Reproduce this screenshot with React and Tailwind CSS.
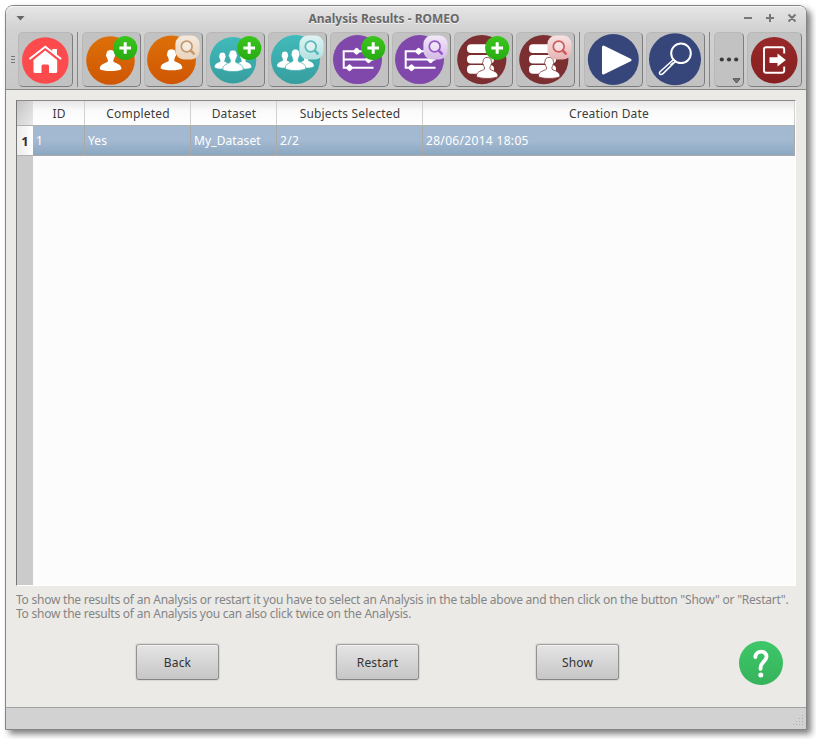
import React from "react";

function ToolButton({ label, width = "w-[59px]", vb = 59, children }) {
  return (
    <button
      aria-label={label}
      className={`${width} h-[55px] shrink-0 rounded-[5px] border border-t-[#b8b8b8] border-l-[#b8b8b8] border-r-[#7d7d7d] border-b-[#7d7d7d] bg-[#c2c2c2]`}
    >
      <svg viewBox={`0 0 ${vb} 55`} className="-m-px block h-[55px] max-w-none" style={{ width: vb }}>
        {children}
      </svg>
    </button>
  );
}

function Separator({ className }) {
  return <div className={`h-[55px] w-px shrink-0 bg-[#858585] ${className}`} />;
}

function PlusBadge() {
  return (
    <g>
      <circle cx="43.2" cy="16" r="12.1" fill="url(#green)" />
      <path d="M43.2 10.2v11.6M37.4 16h11.6" stroke="#fff" strokeWidth="3" fill="none" />
    </g>
  );
}

function LensBadge({ fill, stroke }) {
  return (
    <g>
      <rect x="31.4" y="3.4" width="24.2" height="24.2" rx="8.5" fill={fill} />
      <circle cx="42.7" cy="14.500" r="5.4" fill="#fff" fillOpacity=".35" stroke={stroke} strokeWidth="1.7" />
      <path d="M46.800 18.600l2.9 3" stroke={stroke} strokeWidth="2.6" strokeLinecap="round" />
    </g>
  );
}

const PERSON =
  "M-4.2 -6.800C-4.2 -9.8 -2.4 -11 0 -11S4.2 -9.8 4.2 -6.800C4.900 -6.4 4.700 -4.400 3.900 -4C3.600 -2.600 3.100 -2 2.800 -1.400V.8C4.500 2.400 10.800 2.600 10.900 8C7.500 10.700 -7.500 10.700 -10.900 8C-10.800 2.600 -4.500 2.400 -2.800 .8V-1.400C-3.100 -2 -3.600 -2.600 -3.900 -4C-4.700 -4.400 -4.900 -6.400 -4.2 -6.800Z";

function Person({ x, y, sx = 1, sy = 1, ...rest }) {
  return <path d={PERSON} transform={`translate(${x} ${y}) scale(${sx} ${sy})`} fill="#fff" {...rest} />;
}

function People({ cx, cy }) {
  return (
    <g>
      <Person x={cx - 10.6} y={cy} sx={0.72} sy={0.78} />
      <Person x={cx + 10.6} y={cy} sx={0.72} sy={0.78} />
      <Person x={cx} y={cy + 0.3} sx={0.95} sy={1.02} stroke="#3cabab" strokeWidth=".7" />
    </g>
  );
}

function Sliders() {
  return (
    <g>
      <circle cx="27.5" cy="27.6" r="24.5" fill="#8148ab" />
      <path d="M43.5 19.2H13.7V35.8H43.5M14 27.5H43.5" fill="none" stroke="#fff" strokeWidth="2" />
      <g fill="#fff">
        <rect x="23.8" y="16.5" width="5.6" height="5.6" rx="1.4" transform="rotate(45 26.6 19.3)" />
        <rect x="35.8" y="25" width="5.6" height="5.6" rx="1.4" transform="rotate(45 38.6 27.8)" />
        <rect x="16.7" y="33" width="5.6" height="5.6" rx="1.4" transform="rotate(45 19.5 35.8)" />
      </g>
    </g>
  );
}

function Stack() {
  return (
    <g>
      <circle cx="27.8" cy="27.6" r="24.6" fill="#7b2f30" />
      <g fill="#fff">
        <rect x="13" y="12.3" width="27" height="8.8" rx="4" />
        <rect x="13" y="23" width="27" height="8.6" rx="4" />
        <rect x="13" y="33" width="27" height="8.8" rx="4" />
      </g>
      <Person x={33.2} y={36.4} stroke="#7b2f30" strokeWidth=".8" />
    </g>
  );
}

function Gradients() {
  const stops = [
    ["green", "#3cc51d", "#27ab13"],
    ["orange", "#dd7008", "#cf5603"],
    ["teal", "#41babb", "#379e9f"],
    ["red", "#98292a", "#861f20"],
    ["help", "#3ec769", "#36b35b"],
    ["lensTan", "#f6e9dc", "#e9d3bd"],
    ["lensTeal", "#dff4f4", "#b4e0e0"],
    ["lensPurple", "#f2e9f9", "#d2b9e5"],
    ["lensRed", "#f8e2e2", "#e6b4b4"],
  ];
  return (
    <svg className="absolute h-0 w-0">
      <defs>
        {stops.map(([id, a, b]) => (
          <linearGradient key={id} id={id} x1="0" y1="0" x2="0" y2="1">
            <stop offset="0" stopColor={a} />
            <stop offset="1" stopColor={b} />
          </linearGradient>
        ))}
      </defs>
    </svg>
  );
}

function TitleBar() {
  return (
    <header className="relative flex h-[23px] items-center justify-between rounded-t-[7px] bg-linear-to-b from-[#e6e6e6] to-[#d2d2d2] shadow-[inset_0_1px_0_#f6f6f6]">
      <svg width="9" height="6" className="mt-px ml-[10px]">
        <path d="M.5 1h8L4.500 5.500z" fill="#666" />
      </svg>
      <h1 className="absolute inset-x-0 top-[4px] pr-[44px] text-center text-[12px] leading-[18px] font-bold text-[#686868]">
        <span className="[text-shadow:0_1px_0_#f4f4f4]">Analysis Results - ROMEO</span>
      </h1>
      <svg width="54" height="12" className="mr-[9px] mt-px" fill="none" stroke="#777" strokeWidth="2">
        <path d="M1 6h8M23 6h8M27 2v8M45.500 2.500l7 7M52.500 2.500l-7 7" />
      </svg>
    </header>
  );
}

function ToolBar() {
  return (
    <nav className="flex h-[61px] items-start border-b border-[#8a8a8a] bg-linear-to-b from-[#d2d2d2] to-[#c8c8c8] pt-[3px]">
      <div className="mt-[24px] ml-[5px] flex w-[7px] flex-col gap-[2px]">
        <i className="h-px w-[4px] bg-[#777]" />
        <i className="h-px w-[4px] bg-[#777]" />
        <i className="h-px w-[4px] bg-[#777]" />
      </div>
      <ToolButton label="Home" width="w-[55px]" vb={55}>
        <circle cx="27.3" cy="28.5" r="23.3" fill="#fd4b4d" />
        <path d="M11.500 27L27.300 14.700L43.100 27" fill="none" stroke="#fff" strokeWidth="2" />
        <path d="M34.300 17h4.700v7.500l-4.700-3.700z" fill="#fff" />
        <path d="M27.300 18.600L39.200 28V39.500q0 1.500-1.500 1.500H31V34q0-1.500-1.500-1.500H25q-1.500 0-1.500 1.500v7H17q-1.500 0-1.500-1.500V28z" fill="#fff" />
      </ToolButton>
      <Separator className="mr-[4px] ml-[4px]" />
      <div className="flex gap-[3px]">
        <ToolButton label="New subject">
          <circle cx="28.500" cy="28.500" r="24.300" fill="url(#orange)" />
          <Person x={28.6} y={29} />
          <PlusBadge />
        </ToolButton>
        <ToolButton label="Find subject">
          <circle cx="27.500" cy="27.800" r="24.400" fill="url(#orange)" />
          <Person x={27.5} y={28.2} />
          <LensBadge fill="url(#lensTan)" stroke="#c39b70" />
        </ToolButton>
        <ToolButton label="New group">
          <circle cx="27" cy="28.300" r="23.300" fill="url(#teal)" />
          <People cx={27} cy={29} />
          <PlusBadge />
        </ToolButton>
        <ToolButton label="Find group">
          <circle cx="27.500" cy="27.500" r="24.500" fill="url(#teal)" />
          <People cx={27.5} cy={28} />
          <LensBadge fill="url(#lensTeal)" stroke="#58b7ba" />
        </ToolButton>
        <ToolButton label="New pipeline">
          <Sliders />
          <PlusBadge />
        </ToolButton>
        <ToolButton label="Find pipeline">
          <Sliders />
          <LensBadge fill="url(#lensPurple)" stroke="#9a55c8" />
        </ToolButton>
        <ToolButton label="New dataset">
          <Stack />
          <PlusBadge />
        </ToolButton>
        <ToolButton label="Find dataset">
          <Stack />
          <LensBadge fill="url(#lensRed)" stroke="#cf5b5b" />
        </ToolButton>
      </div>
      <Separator className="mr-[4px] ml-[4px]" />
      <div className="flex gap-[3px]">
        <ToolButton label="Run analysis">
          <circle cx="29.300" cy="27.500" r="25.500" fill="#37467a" />
          <path d="M19.500 15L46 28L19.500 41z" fill="#fff" stroke="#fff" strokeWidth="3" strokeLinejoin="round" />
        </ToolButton>
        <ToolButton label="Results">
          <circle cx="29" cy="27.300" r="26" fill="#37467a" />
          <g fill="none" stroke="#fff">
            <circle cx="35" cy="21.300" r="9.800" strokeWidth="2" />
            <path d="M27.300 27.800L14 39.800Q12.800 41.500 14.200 42.300Q15.600 43 17 41.600L29.200 29.700M27.300 30.500L24.500 33.300" strokeWidth="1.500" />
          </g>
        </ToolButton>
      </div>
      <Separator className="mr-[4px] ml-[4px]" />
      <div className="flex gap-[3px]">
        <ToolButton label="More" width="w-[30px]" vb={30}>
          <g fill="#3a3a3a">
            <circle cx="7.800" cy="27.500" r="2.100" />
            <circle cx="15" cy="27.500" r="2.100" />
            <circle cx="22.200" cy="27.500" r="2.100" />
          </g>
          <path d="M19 46.700h7l-3.500 4.300z" fill="#777" stroke="#555" strokeWidth="1" />
        </ToolButton>
        <ToolButton label="Exit" width="w-[55px]" vb={55}>
          <circle cx="27.200" cy="28.200" r="23.300" fill="url(#red)" />
          <path d="M37.200 21.500V17.500Q37.200 15.300 35 15.300H19Q17 15.300 17 17.500V38.500Q17 40.700 19 40.700H35Q37.200 40.700 37.200 38.500V34.500" fill="none" stroke="#fff" strokeWidth="1.900" />
          <path d="M22.500 25.300H30.500V21.500L38.800 28L30.500 34.500V31H22.500z" fill="#fff" />
        </ToolButton>
      </div>
    </nav>
  );
}

const COLS = "grid grid-cols-[16px_52px_106px_86px_146px_372px]";

function ResultsTable() {
  const heads = ["ID", "Completed", "Dataset", "Subjects Selected", "Creation Date"];
  const cells = ["1", "Yes", "My_Dataset", "2/2", "28/06/2014 18:05"];
  return (
    <section className="flex h-[486px] w-[780px] flex-col border border-t-[#888] border-r-white border-b-white border-l-[#777] bg-[#fcfcfc] text-[12px]">
      <div className={`${COLS} h-[25px] shrink-0 grid-rows-[24px] border-b border-[#b0b0b0] bg-linear-to-b from-[#e7e7e7] via-[#fafafa] via-40% to-white text-[#3c3c3c]`}>
        <div className="bg-linear-to-br from-[#c4c4c4] to-[#eaeaea]" />
        {heads.map((h) => (
          <div key={h} className="border-r border-[#d0d0d0] pl-px text-center leading-[25px] tracking-[0.18px] whitespace-nowrap">
            {h}
          </div>
        ))}
      </div>
      <div className={`${COLS} h-[30px] shrink-0 grid-rows-[30px]`}>
        <div className="border-b border-[#b0b0b0] bg-linear-to-r from-[#ececec] to-white pt-px text-center text-[13px] leading-[28px] font-bold text-[#333]">1</div>
        {cells.map((c, i) => (
          <div
            key={i}
            className={`border-r border-b border-[#aaa9a8] bg-linear-to-b from-[#a3b9d1] from-50% to-[#8ba7c1] pl-[3px] leading-[29px] whitespace-nowrap text-white ${i > 2 ? "tracking-[0.32px]" : "tracking-[0.1px]"}`}
          >
            {c}
          </div>
        ))}
      </div>
      <div className="w-[16px] grow bg-[#cbcbcb]" />
    </section>
  );
}

function ActionButton({ children }) {
  return (
    <button className="h-[36px] w-[83px] rounded-[3px] border border-t-[#a2a2a2] border-r-[#929292] border-b-[#858585] border-l-[#929292] bg-linear-to-b from-[#e5e5e5] to-[#c6c6c6] pt-[2px] text-[12px] tracking-[0.15px] text-[#333] shadow-[inset_0_1px_0_#f0f0f0,0_0_1px_1px_rgba(0,0,0,0.08)]">
      {children}
    </button>
  );
}

export default function App() {
  return (
    <div className="h-[739px] w-[816px] overflow-hidden bg-white pt-[5px] pl-[5px] font-['Noto_Sans',sans-serif]">
      <Gradients />
      <main className="flex h-[725px] w-[802px] flex-col rounded-t-[8px] border border-[#858585] bg-[#ebeae6] shadow-[4px_4px_6px_rgba(0,0,0,0.5)]">
        <TitleBar />
        <ToolBar />
        <div className="flex grow flex-col pt-[10px] pl-[10px]">
          <ResultsTable />
          <div className="mt-[7px] text-[12px] leading-[14px] tracking-[-0.235px] whitespace-nowrap text-[#858585]">
            <p>
              To show the results of an Analysis or restart it you have to select an Analysis in the table above and then click on the button "Show" or "Restart".
            </p>
            <p>To show the results of an Analysis you can also click twice on the Analysis.</p>
          </div>
          <div className="mt-[20px] ml-[120px] flex items-start">
            <div className="flex gap-[117px] pt-[3px]">
              <ActionButton>Back</ActionButton>
              <ActionButton>Restart</ActionButton>
              <ActionButton>Show</ActionButton>
            </div>
            <button aria-label="Help" className="ml-[120px]">
              <svg width="44" height="44" viewBox="0 0 44 44" className="block">
                <circle cx="22" cy="22" r="22" fill="url(#help)" />
                <path d="M16.300 16C16.800 8.800 27.800 9.200 27.500 15.800C27.200 20.600 20.300 22 21.600 27.800" fill="none" stroke="#fff" strokeWidth="3.800" strokeLinecap="round" />
                <circle cx="21.800" cy="34" r="2.500" fill="#fff" />
              </svg>
            </button>
          </div>
        </div>
        <footer className="flex h-[22px] shrink-0 items-end justify-end border-t border-[#a2a2a2] bg-[#d2d2d2] pr-[2px] pb-[3px]">
          <svg width="11" height="11" fill="#b0b0b0">
            <path d="M9 0h1v1h-1zM9 3h1v1h-1zM6 3h1v1h-1zM9 6h1v1h-1zM6 6h1v1h-1zM3 6h1v1h-1zM9 9h1v1h-1zM6 9h1v1h-1zM3 9h1v1h-1zM0 9h1v1h-1z" />
          </svg>
        </footer>
      </main>
    </div>
  );
}
